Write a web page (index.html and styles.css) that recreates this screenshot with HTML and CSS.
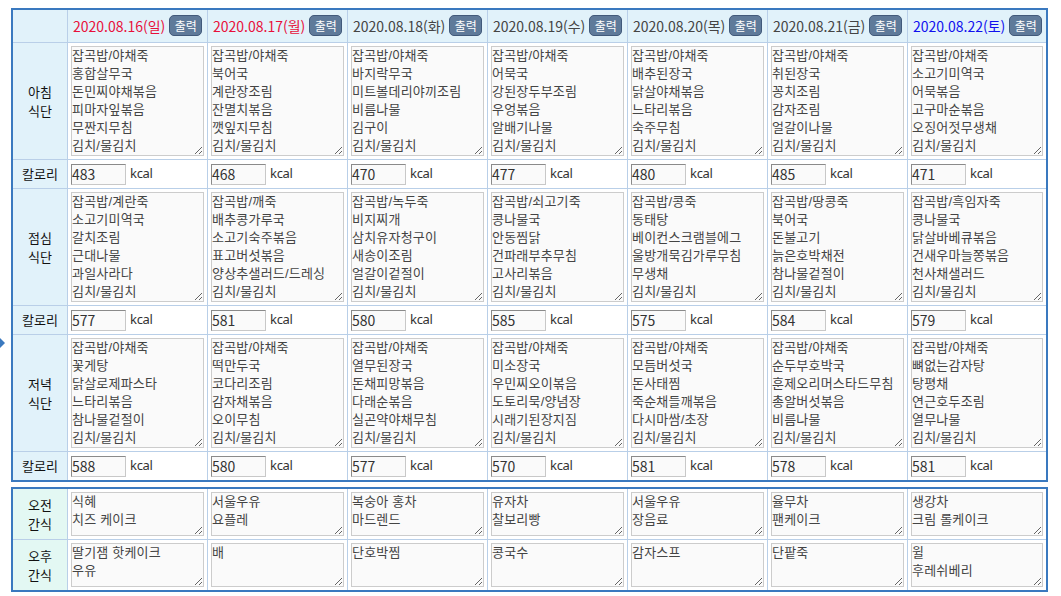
FILE: index.html
```html
<!DOCTYPE html>
<html lang="ko">
<head>
<meta charset="utf-8">
<title>식단표</title>
<link rel="stylesheet" href="styles.css">
</head>
<body>
<main class="page">
<span class="marker"></span>
<table class="grid meals">
<colgroup><col class="c-label"><col class="c-day"><col class="c-day"><col class="c-day"><col class="c-day"><col class="c-day"><col class="c-day"><col class="c-last"></colgroup>
<tr class="head">
<th class="label"></th>
<th class="day"><div class="date"><span class="holiday">2020.08.16(일)</span><button class="print">출력</button></div></th>
<th class="day"><div class="date"><span class="holiday">2020.08.17(월)</span><button class="print">출력</button></div></th>
<th class="day"><div class="date"><span class="plain">2020.08.18(화)</span><button class="print">출력</button></div></th>
<th class="day"><div class="date"><span class="plain">2020.08.19(수)</span><button class="print">출력</button></div></th>
<th class="day"><div class="date"><span class="plain">2020.08.20(목)</span><button class="print">출력</button></div></th>
<th class="day"><div class="date"><span class="plain">2020.08.21(금)</span><button class="print">출력</button></div></th>
<th class="day"><div class="date"><span class="sat">2020.08.22(토)</span><button class="print">출력</button></div></th>
</tr>
<tr>
<th class="label">아침<br>식단</th>
<td><textarea class="menu">잡곡밥/야채죽
홍합살무국
돈민찌야채볶음
피마자잎볶음
무짠지무침
김치/물김치</textarea></td>
<td><textarea class="menu">잡곡밥/야채죽
북어국
계란장조림
잔멸치볶음
깻잎지무침
김치/물김치</textarea></td>
<td><textarea class="menu">잡곡밥/야채죽
바지락무국
미트볼데리야끼조림
비름나물
김구이
김치/물김치</textarea></td>
<td><textarea class="menu">잡곡밥/야채죽
어묵국
강된장두부조림
우엉볶음
알배기나물
김치/물김치</textarea></td>
<td><textarea class="menu">잡곡밥/야채죽
배추된장국
닭살야채볶음
느타리볶음
숙주무침
김치/물김치</textarea></td>
<td><textarea class="menu">잡곡밥/야채죽
취된장국
꽁치조림
감자조림
얼갈이나물
김치/물김치</textarea></td>
<td><textarea class="menu">잡곡밥/야채죽
소고기미역국
어묵볶음
고구마순볶음
오징어젓무생채
김치/물김치</textarea></td>
</tr>
<tr class="kcal-row">
<th class="label">칼로리</th>
<td><div class="kcal"><input class="num" value="483"><span>kcal</span></div></td>
<td><div class="kcal"><input class="num" value="468"><span>kcal</span></div></td>
<td><div class="kcal"><input class="num" value="470"><span>kcal</span></div></td>
<td><div class="kcal"><input class="num" value="477"><span>kcal</span></div></td>
<td><div class="kcal"><input class="num" value="480"><span>kcal</span></div></td>
<td><div class="kcal"><input class="num" value="485"><span>kcal</span></div></td>
<td><div class="kcal"><input class="num" value="471"><span>kcal</span></div></td>
</tr>
<tr>
<th class="label">점심<br>식단</th>
<td><textarea class="menu">잡곡밥/계란죽
소고기미역국
갈치조림
근대나물
과일사라다
김치/물김치</textarea></td>
<td><textarea class="menu">잡곡밥/깨죽
배추콩가루국
소고기숙주볶음
표고버섯볶음
양상추샐러드/드레싱
김치/물김치</textarea></td>
<td><textarea class="menu">잡곡밥/녹두죽
비지찌개
삼치유자청구이
새송이조림
얼갈이겉절이
김치/물김치</textarea></td>
<td><textarea class="menu">잡곡밥/쇠고기죽
콩나물국
안동찜닭
건파래부추무침
고사리볶음
김치/물김치</textarea></td>
<td><textarea class="menu">잡곡밥/콩죽
동태탕
베이컨스크램블에그
울방개묵김가루무침
무생채
김치/물김치</textarea></td>
<td><textarea class="menu">잡곡밥/땅콩죽
북어국
돈불고기
늙은호박채전
참나물겉절이
김치/물김치</textarea></td>
<td><textarea class="menu">잡곡밥/흑임자죽
콩나물국
닭살바베큐볶음
건새우마늘쫑볶음
천사채샐러드
김치/물김치</textarea></td>
</tr>
<tr class="kcal-row">
<th class="label">칼로리</th>
<td><div class="kcal"><input class="num" value="577"><span>kcal</span></div></td>
<td><div class="kcal"><input class="num" value="581"><span>kcal</span></div></td>
<td><div class="kcal"><input class="num" value="580"><span>kcal</span></div></td>
<td><div class="kcal"><input class="num" value="585"><span>kcal</span></div></td>
<td><div class="kcal"><input class="num" value="575"><span>kcal</span></div></td>
<td><div class="kcal"><input class="num" value="584"><span>kcal</span></div></td>
<td><div class="kcal"><input class="num" value="579"><span>kcal</span></div></td>
</tr>
<tr>
<th class="label">저녁<br>식단</th>
<td><textarea class="menu">잡곡밥/야채죽
꽃게탕
닭살로제파스타
느타리볶음
참나물겉절이
김치/물김치</textarea></td>
<td><textarea class="menu">잡곡밥/야채죽
떡만두국
코다리조림
감자채볶음
오이무침
김치/물김치</textarea></td>
<td><textarea class="menu">잡곡밥/야채죽
열무된장국
돈채피망볶음
다래순볶음
실곤약야채무침
김치/물김치</textarea></td>
<td><textarea class="menu">잡곡밥/야채죽
미소장국
우민찌오이볶음
도토리묵/양념장
시래기된장지짐
김치/물김치</textarea></td>
<td><textarea class="menu">잡곡밥/야채죽
모듬버섯국
돈사태찜
죽순채들깨볶음
다시마쌈/초장
김치/물김치</textarea></td>
<td><textarea class="menu">잡곡밥/야채죽
순두부호박국
훈제오리머스타드무침
총알버섯볶음
비름나물
김치/물김치</textarea></td>
<td><textarea class="menu">잡곡밥/야채죽
뼈없는감자탕
탕평채
연근호두조림
열무나물
김치/물김치</textarea></td>
</tr>
<tr class="kcal-row">
<th class="label">칼로리</th>
<td><div class="kcal"><input class="num" value="588"><span>kcal</span></div></td>
<td><div class="kcal"><input class="num" value="580"><span>kcal</span></div></td>
<td><div class="kcal"><input class="num" value="577"><span>kcal</span></div></td>
<td><div class="kcal"><input class="num" value="570"><span>kcal</span></div></td>
<td><div class="kcal"><input class="num" value="581"><span>kcal</span></div></td>
<td><div class="kcal"><input class="num" value="578"><span>kcal</span></div></td>
<td><div class="kcal"><input class="num" value="581"><span>kcal</span></div></td>
</tr>
</table>
<table class="grid snacks">
<colgroup><col class="c-label"><col class="c-day"><col class="c-day"><col class="c-day"><col class="c-day"><col class="c-day"><col class="c-day"><col class="c-last"></colgroup>
<tr class="first">
<th class="label snack">오전<br>간식</th>
<td><textarea class="menu short">식혜
치즈 케이크</textarea></td>
<td><textarea class="menu short">서울우유
요플레</textarea></td>
<td><textarea class="menu short">복숭아 홍차
마드렌드</textarea></td>
<td><textarea class="menu short">유자차
찰보리빵</textarea></td>
<td><textarea class="menu short">서울우유
장음료</textarea></td>
<td><textarea class="menu short">율무차
팬케이크</textarea></td>
<td><textarea class="menu short">생강차
크림 롤케이크</textarea></td>
</tr>
<tr>
<th class="label snack">오후<br>간식</th>
<td><textarea class="menu short">딸기잼 핫케이크
우유</textarea></td>
<td><textarea class="menu short">배</textarea></td>
<td><textarea class="menu short">단호박찜</textarea></td>
<td><textarea class="menu short">콩국수</textarea></td>
<td><textarea class="menu short">감자스프</textarea></td>
<td><textarea class="menu short">단팥죽</textarea></td>
<td><textarea class="menu short">윌
후레쉬베리</textarea></td>
</tr>
</table>
</main>
</body>
</html>
```
FILE: styles.css
```css
* { box-sizing: border-box; }
html, body { margin: 0; padding: 0; background: #fff; }
body {
  font-family: "Noto Sans CJK KR", "Noto Sans", sans-serif;
  font-size: 13px;
  line-height: 18px;
  color: #333;
}
.page { position: relative; padding: 8px 0 0 11px; }
.marker {
  position: absolute;
  left: 0;
  top: 338px;
  width: 0;
  height: 0;
  border-left: 5px solid #3a79bf;
  border-top: 5px solid transparent;
  border-bottom: 5px solid transparent;
}
.grid {
  width: 1037px;
  table-layout: fixed;
  border-collapse: separate;
  border-spacing: 0;
  border: 2px solid #3a79bf;
}
.snacks { margin-top: 5px; }
.c-label { width: 54px; }
.c-day { width: 140px; }
.c-last { width: 139px; }
.grid th, .grid td {
  padding: 3px 2px 3px 3px;
  border-top: 1px solid #b9cfe8;
  border-left: 1px solid #b9cfe8;
  font-weight: 400;
  vertical-align: middle;
}
.grid td { padding-right: 3px; }
.grid th:first-child { border-left: 0; padding: 0; }
.grid tr:first-child th, .grid tr:first-child td { border-top: 0; }
.label { background: #e1f2fa; color: #111; text-align: center; line-height: 19px; }
.kcal-row .label { line-height: 18px; }
.label.snack { background: #e3f8f3; }
.head { height: 32px; }
.grid .day { background: #e1f2fa; padding: 0 0 0 5px; }
.date { display: flex; align-items: center; gap: 4px; white-space: nowrap; font-size: 14px; }
.holiday { color: #e8103a; }
.plain { color: #444; }
.sat { color: #1010ee; }
.print {
  width: 33px;
  height: 21px;
  margin-bottom: 1px;
  padding: 0;
  background: #5f7a9a;
  border: 1px solid #41597a;
  border-radius: 5px;
  color: #fff;
  font: 12px/19px "Noto Sans CJK KR", sans-serif;
}
.menu {
  display: block;
  width: 100%;
  height: 110px;
  padding: 0;
  border: 1px solid #cccccc;
  background: #fafafa;
  color: #444;
  font: 13px/18px "Liberation Sans", "Noto Sans CJK KR", sans-serif;
  letter-spacing: 0.2px;
  overflow: hidden;
  border-radius: 0;
  outline: 0;
}
.menu.short { height: 44px; }
.kcal-row { height: 29px; }
.kcal { display: flex; align-items: center; gap: 4px; }
.kcal span {
  margin-bottom: 2px;
  color: #333;
  font-family: "Noto Sans", sans-serif;
  letter-spacing: -0.3px;
}
.num {
  width: 55px;
  height: 21px;
  padding: 0;
  background: #fafafa;
  border-style: solid;
  border-width: 1px;
  border-color: #8a8a8a #c8c8c8 #c8c8c8 #8a8a8a;
  color: #333;
  font: 14px/19px "Noto Sans CJK KR", "Noto Sans", sans-serif;
  border-radius: 0;
}
```
